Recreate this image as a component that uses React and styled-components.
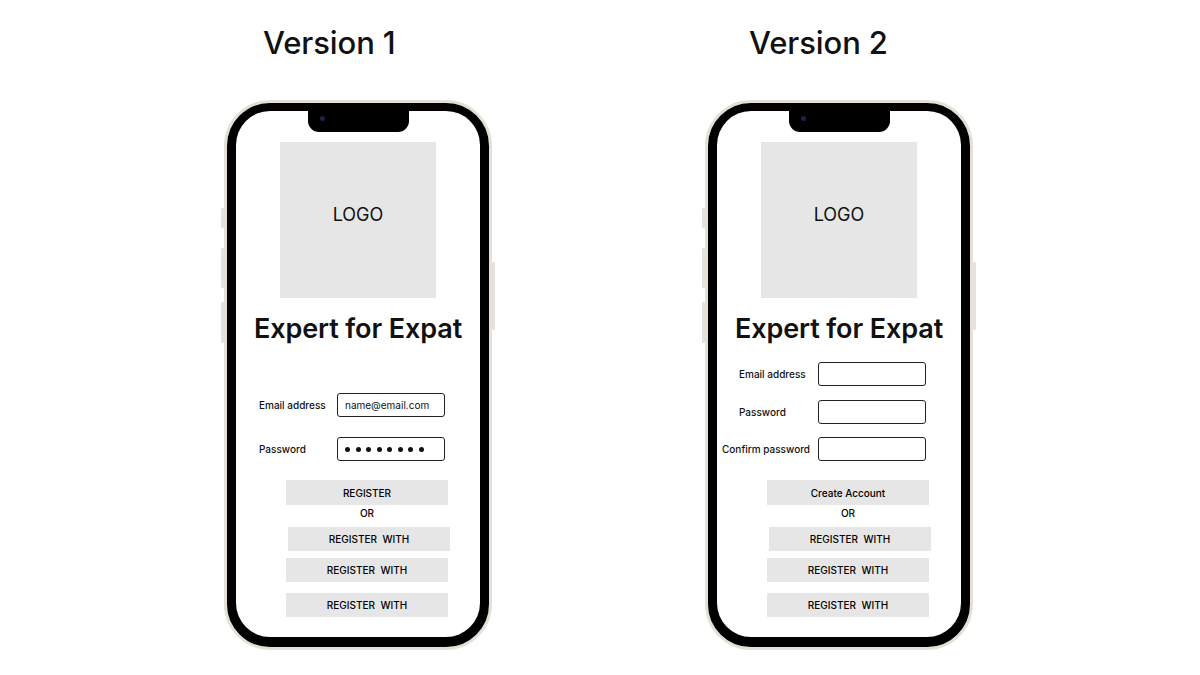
import React from "react";
import styled, { createGlobalStyle } from "styled-components";

const Global = createGlobalStyle`
  html, body { margin: 0; padding: 0; background: #ffffff; }
  body { font-family: Inter, "Noto Sans", "Liberation Sans", sans-serif; color: #111; }
  * { box-sizing: border-box; }
`;

const Page = styled.div`
  width: 1200px;
  height: 675px;
  display: flex;
  flex-direction: row;
  gap: 213px;
  padding-left: 224px;
  padding-top: 25px;
  overflow: hidden;
`;

const Column = styled.div`
  display: flex;
  flex-direction: column;
`;

const Heading = styled.h1`
  margin: 0 0 39px ${(p) => p.$indent}px;
  height: 36px;
  line-height: 36px;
  font-size: 31px;
  font-weight: 500;
  color: #111;
  letter-spacing: -0.1px;
`;

const Phone = styled.div`
  position: relative;
  width: 268px;
  height: 550px;
  border: 3px solid #e5e0d7;
  border-radius: 46px;
  background: #000;
  padding: 8px 9px 10px 9px;
`;

const SideButton = styled.div`
  position: absolute;
  top: ${(p) => p.$top}px;
  height: ${(p) => p.$h}px;
  ${(p) => (p.$right ? "right: -6px;" : "left: -6px;")}
  width: 3px;
  border-radius: 1px;
  background: #e6e2db;
`;

const Speaker = styled.div`
  position: absolute;
  top: 1px;
  left: 110px;
  width: 44px;
  height: 2px;
  border-radius: 1px;
  background: #3a3a3a;
`;

const Notch = styled.div`
  position: absolute;
  top: 0;
  left: 81px;
  width: 101px;
  height: 29px;
  background: #000;
  border-radius: 0 0 11px 11px;
  z-index: 2;
`;

const Camera = styled.div`
  position: absolute;
  top: 13px;
  left: 12px;
  width: 5px;
  height: 5px;
  border-radius: 50%;
  background: #1d2350;
`;

const Screen = styled.div`
  width: 100%;
  height: 100%;
  background: #fff;
  border-radius: 34px;
  display: flex;
  flex-direction: column;
  align-items: center;
  padding-top: 31px;
  overflow: hidden;
`;

const LogoBox = styled.div`
  width: 156px;
  height: 156px;
  background: #e6e6e6;
  display: flex;
  align-items: center;
  justify-content: center;
  padding-bottom: 12px;
  font-size: 18px;
  font-weight: 400;
  color: #111;
`;

const Title = styled.h2`
  margin: 15px 0 0 0;
  height: 32px;
  line-height: 32px;
  font-size: 27px;
  font-weight: 600;
  color: #111;
  white-space: nowrap;
  letter-spacing: -0.1px;
`;

const Form = styled.div`
  width: 100%;
  display: flex;
  flex-direction: column;
  margin-top: ${(p) => p.$top}px;
`;

const Row = styled.div`
  display: flex;
  align-items: center;
  height: 24px;
  margin-top: ${(p) => p.$gap || 0}px;
`;

const Label = styled.div`
  width: 101px;
  padding-left: ${(p) => p.$indent}px;
  font-size: 10px;
  font-weight: 500;
  color: #111;
  white-space: nowrap;
`;

const Input = styled.div`
  width: 108px;
  height: 24px;
  border: 1.5px solid #222;
  border-radius: 3px;
  display: flex;
  align-items: center;
  gap: 5.5px;
  padding-left: 7px;
  font-size: 10px;
  color: #111;
  white-space: nowrap;
`;

const Dot = styled.span`
  width: 5px;
  height: 5px;
  border-radius: 50%;
  background: #111;
`;

const Actions = styled.div`
  width: 100%;
  display: flex;
  flex-direction: column;
  align-items: flex-start;
  padding-left: 50px;
  margin-top: 19px;
`;

const Button = styled.div`
  width: 162px;
  height: ${(p) => p.$h || 24}px;
  background: #e6e6e6;
  display: flex;
  align-items: center;
  justify-content: center;
  font-size: 10px;
  font-weight: 500;
  color: #000;
  white-space: pre;
  margin-top: ${(p) => p.$gap || 0}px;
  margin-left: ${(p) => p.$shift || 0}px;
`;

const Or = styled.div`
  width: 162px;
  height: 16px;
  line-height: 16px;
  text-align: center;
  font-size: 10px;
  font-weight: 500;
  color: #000;
`;

function PhoneFrame({ children }) {
  return (
    <Phone>
      <SideButton $top={105} $h={20} />
      <SideButton $top={145} $h={40} />
      <SideButton $top={199} $h={41} />
      <SideButton $right $top={159} $h={68} />
      <Speaker />
      <Notch>
        <Camera />
      </Notch>
      <Screen>{children}</Screen>
    </Phone>
  );
}

function SocialButtons() {
  return (
    <>
      <Button $gap={6} $shift={2}>REGISTER  WITH</Button>
      <Button $gap={7}>REGISTER  WITH</Button>
      <Button $gap={11}>REGISTER  WITH</Button>
    </>
  );
}

export default function App() {
  return (
    <>
      <Global />
      <Page>
        <Column>
          <Heading $indent={39}>Version 1</Heading>
          <PhoneFrame>
            <LogoBox>LOGO</LogoBox>
            <Title>Expert for Expat</Title>
            <Form $top={48}>
              <Row>
                <Label $indent={23}>Email address</Label>
                <Input>name@email.com</Input>
              </Row>
              <Row $gap={20}>
                <Label $indent={23}>Password</Label>
                <Input>
                  {Array.from({ length: 8 }).map((_, i) => (
                    <Dot key={i} />
                  ))}
                </Input>
              </Row>
            </Form>
            <Actions>
              <Button $h={25}>REGISTER</Button>
              <Or>OR</Or>
              <SocialButtons />
            </Actions>
          </PhoneFrame>
        </Column>
        <Column>
          <Heading $indent={44}>Version 2</Heading>
          <PhoneFrame>
            <LogoBox>LOGO</LogoBox>
            <Title>Expert for Expat</Title>
            <Form $top={17}>
              <Row>
                <Label $indent={22}>Email address</Label>
                <Input />
              </Row>
              <Row $gap={14}>
                <Label $indent={22}>Password</Label>
                <Input />
              </Row>
              <Row $gap={13}>
                <Label $indent={5}>Confirm password</Label>
                <Input />
              </Row>
            </Form>
            <Actions>
              <Button $h={25}>Create Account</Button>
              <Or>OR</Or>
              <SocialButtons />
            </Actions>
          </PhoneFrame>
        </Column>
      </Page>
    </>
  );
}
